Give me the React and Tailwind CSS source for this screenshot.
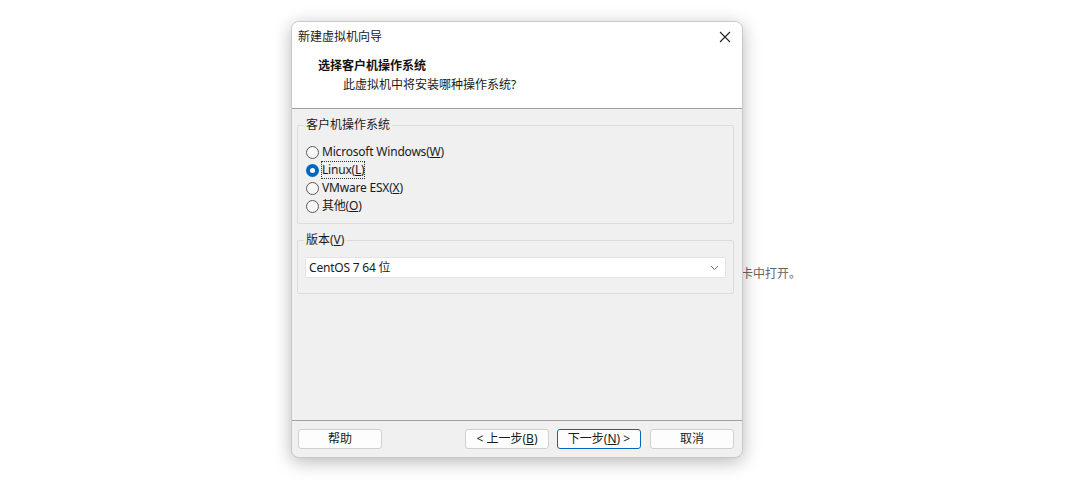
import React from "react";

const font = { fontFamily: '"Noto Sans", "Noto Sans CJK SC", sans-serif' };

function Radio({ checked, label, u, after, focus }) {
  return (
    <div className="flex items-center h-[18px]">
      {checked ? (
        <span className="w-[13px] h-[13px] rounded-full bg-[#0067c0] flex items-center justify-center">
          <span className="w-[5px] h-[5px] rounded-full bg-white" />
        </span>
      ) : (
        <span className="w-[13px] h-[13px] rounded-full border border-[#5a5a5a] bg-[#f7f7f7]" />
      )}
      <span
        className={
          "ml-[3px] text-[12px] leading-[16px] tracking-[-0.2px] text-[#1a1a1a] " +
          (focus ? "outline outline-1 outline-dotted outline-[#333]" : "")
        }
      >
        {label}(<span className="underline">{u}</span>){after}
      </span>
    </div>
  );
}

function Btn({ children, primary }) {
  return (
    <div
      className={
        "w-[84px] h-[20px] flex items-center justify-center rounded-[3px] bg-[#fdfdfd] text-[12px] text-[#1a1a1a] border " +
        (primary ? "border-[#0067c0]" : "border-[#d0d0d0]")
      }
    >
      {children}
    </div>
  );
}

export default function App() {
  return (
    <div className="relative w-[1080px] h-[486px] bg-white overflow-hidden" style={font}>
      <div className="absolute left-[741px] top-[266px] text-[12px] leading-[16px] text-[#666]">
        卡中打开。
      </div>
      <div className="relative ml-[291px] mt-[21px] w-[452px] h-[437px] rounded-[8px] overflow-hidden bg-[#f0f0f0] shadow-[0_4px_18px_rgba(0,0,0,0.28)] border border-[#c8c8c8] flex flex-col">
        <div className="bg-white h-[87px] border-b border-[#a0a0a0] flex flex-col">
          <div className="h-[30px] flex items-center justify-between pl-[6px] pr-[10px]">
            <span className="text-[12px] text-[#1a1a1a]">新建虚拟机向导</span>
            <svg width="12" height="12" viewBox="0 0 12 12" className="mr-[1px]">
              <path d="M1 1L11 11M11 1L1 11" stroke="#222" strokeWidth="1.1" />
            </svg>
          </div>
          <div className="pl-[26px] text-[12px] font-bold leading-[16px] text-[#111] mt-[6px]">
            选择客户机操作系统
          </div>
          <div className="pl-[51px] text-[12px] leading-[16px] text-[#1a1a1a] mt-[3px]">
            此虚拟机中将安装哪种操作系统?
          </div>
        </div>
        <div className="flex-1 pl-[5px] pr-[8px] pt-[16px]">
          <div className="relative border border-[#dcdcdc] rounded-[2px] h-[99px] pl-[8px] pt-[17px]">
            <span className="absolute -top-[9px] left-[6px] px-[2px] bg-[#f0f0f0] text-[12px] leading-[16px] text-[#1a1a1a]">
              客户机操作系统
            </span>
            <Radio label="Microsoft Windows" u="W" />
            <Radio label="Linux" u="L" checked focus />
            <Radio label="VMware ESX" u="X" />
            <Radio label="其他" u="O" />
          </div>
          <div className="relative mt-[16px] border border-[#dcdcdc] rounded-[2px] h-[54px] px-[7px] pt-[16px]">
            <span className="absolute -top-[9px] left-[6px] px-[2px] bg-[#f0f0f0] text-[12px] leading-[16px] text-[#1a1a1a]">
              版本(<span className="underline">V</span>)
            </span>
            <div className="h-[21px] bg-white border border-[#e3e3e3] rounded-[2px] flex items-center justify-between pl-[3px] pr-[6px]">
              <span className="text-[12px] tracking-[-0.2px] text-[#1a1a1a]">CentOS 7 64 位</span>
              <svg width="9" height="6" viewBox="0 0 9 6">
                <path d="M1 1L4.5 4.5L8 1" stroke="#777" strokeWidth="1" fill="none" />
              </svg>
            </div>
          </div>
        </div>
        <div className="h-[37px] border-t border-[#a0a0a0] flex items-center pl-[6px] pr-[8px]">
          <Btn>帮助</Btn>
          <div className="flex-1" />
          <Btn>&lt; 上一步(<span className="underline">B</span>)</Btn>
          <div className="w-[8px]" />
          <Btn primary>下一步(<span className="underline">N</span>) &gt;</Btn>
          <div className="w-[9px]" />
          <Btn>取消</Btn>
        </div>
      </div>
    </div>
  );
}
